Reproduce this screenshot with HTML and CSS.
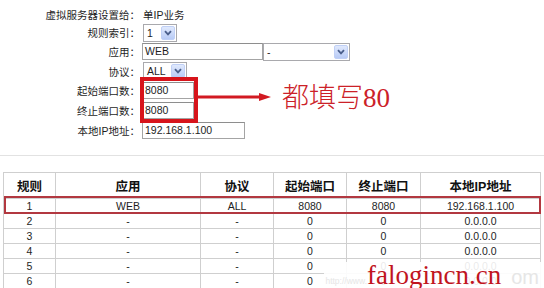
FILE: index.html
```html
<!DOCTYPE html>
<html lang="zh-CN">
<head>
<meta charset="utf-8">
<title>虚拟服务器</title>
<link rel="stylesheet" href="styles.css">
</head>
<body>
<div class="page">
  <div class="form">
    <div class="row h1"><span class="lbl">虚拟服务器设置给：</span><span class="val">单IP业务</span></div>
    <div class="row h2"><span class="lbl">规则索引：</span>
      <div class="sel s-idx"><span class="sv">1</span><span class="btn"><svg width="8" height="6" viewBox="0 0 8 6"><path d="M1 1.2 L4 4.4 L7 1.2" fill="none" stroke="#4a5f8c" stroke-width="1.8"/></svg></span></div>
    </div>
    <div class="row h3"><span class="lbl">应用：</span>
      <div class="inp i-app">WEB</div>
      <div class="sel s-app"><span class="sv">-</span><span class="btn"><svg width="8" height="6" viewBox="0 0 8 6"><path d="M1 1.2 L4 4.4 L7 1.2" fill="none" stroke="#4a5f8c" stroke-width="1.8"/></svg></span></div>
    </div>
    <div class="row h4"><span class="lbl">协议：</span>
      <div class="sel s-pro"><span class="sv">ALL</span><span class="btn"><svg width="8" height="6" viewBox="0 0 8 6"><path d="M1 1.2 L4 4.4 L7 1.2" fill="none" stroke="#4a5f8c" stroke-width="1.8"/></svg></span></div>
    </div>
    <div class="row h5"><span class="lbl">起始端口数：</span><div class="inp i-port">8080</div></div>
    <div class="row h6"><span class="lbl">终止端口数：</span><div class="inp i-port">8080</div></div>
    <div class="row h7"><span class="lbl">本地IP地址：</span><div class="inp i-ip">192.168.1.100</div></div>
  </div>

  <div class="redbox"></div>
  <svg class="arrow" width="76" height="12" viewBox="0 0 76 12"><line x1="0" y1="6" x2="64" y2="6" stroke="#d21a22" stroke-width="3"/><polygon points="62,2 74,6 62,10" fill="#d21a22"/></svg>
  <div class="note">都填写80</div>

  <div class="sep"></div>

  <div class="tablewrap">
    <table class="rules">
      <colgroup>
        <col class="c1"><col class="c2"><col class="c3"><col class="c4"><col class="c5"><col class="c6">
      </colgroup>
      <thead>
        <tr><th>规则</th><th>应用</th><th>协议</th><th>起始端口</th><th>终止端口</th><th>本地IP地址</th></tr>
      </thead>
      <tbody>
        <tr><td>1</td><td>WEB</td><td>ALL</td><td>8080</td><td>8080</td><td>192.168.1.100</td></tr>
        <tr><td>2</td><td>-</td><td>-</td><td>0</td><td>0</td><td>0.0.0.0</td></tr>
        <tr><td>3</td><td>-</td><td>-</td><td>0</td><td>0</td><td>0.0.0.0</td></tr>
        <tr><td>4</td><td>-</td><td>-</td><td>0</td><td>0</td><td>0.0.0.0</td></tr>
        <tr><td>5</td><td>-</td><td>-</td><td>0</td><td>0</td><td>0.0.0.0</td></tr>
        <tr><td>6</td><td>-</td><td>-</td><td>0</td><td>0</td><td>0.0.0.0</td></tr>
      </tbody>
    </table>
    <div class="hl"></div>
  </div>

  <div class="wm"><span class="wm-faint">http://www.</span><span class="wm-red">falogincn.cn</span><span class="wm-faint wm-om">om</span></div>
</div>
</body>
</html>
```

FILE: styles.css
```css
html, body {
  margin: 0;
  padding: 0;
  background: #fff;
}
.page {
  position: relative;
  width: 544px;
  height: 288px;
  overflow: hidden;
  font-family: "Liberation Sans", "Noto Sans CJK SC", sans-serif;
  font-size: 10.5px;
  color: #1e1e1e;
}
.form {
  padding-top: 5px;
}
.row {
  display: flex;
  align-items: center;
}
.h1 { height: 18px; }
.h2 { height: 19px; }
.h3 { height: 19px; }
.h4 { height: 20px; }
.h5 { height: 19px; }
.h6 { height: 20px; }
.h7 { height: 21px; }
.lbl {
  flex: none;
  width: 140px;
  text-align: right;
  white-space: nowrap;
}
.val {
  margin-left: 3px;
}
.inp {
  margin-left: 2px;
  box-sizing: border-box;
  height: 17px;
  border: 1px solid #a4a4a4;
  border-top-color: #8e8e8e;
  padding-left: 2px;
  line-height: 15px;
  background: #fff;
  white-space: nowrap;
}
.i-app { width: 121px; }
.i-port { width: 52px; }
.i-ip { width: 103px; }
.sel {
  margin-left: 3px;
  box-sizing: border-box;
  height: 18px;
  border: 1px solid #a9a9ad;
  display: flex;
  align-items: center;
  justify-content: space-between;
  padding: 0 1px 0 3px;
  background: #fff;
}
.i-app + .sel { margin-left: 0; }
.s-idx { width: 34px; }
.s-app { width: 87px; }
.s-pro { width: 44px; }
.sv { line-height: 16px; }
.btn {
  box-sizing: border-box;
  width: 14px;
  height: 14px;
  border: 1px solid #c0d0f6;
  border-radius: 2px;
  background: linear-gradient(#e0e9fd, #b8cbf6);
  display: flex;
  align-items: center;
  justify-content: center;
}
.redbox {
  position: absolute;
  left: 140px;
  top: 77px;
  width: 58px;
  height: 46px;
  box-sizing: border-box;
  border: 4px solid #d7141b;
}
.arrow {
  position: absolute;
  left: 197px;
  top: 91px;
}
.note {
  position: absolute;
  left: 282px;
  top: 83px;
  font-family: "Liberation Serif", "Noto Sans CJK SC", serif;
  font-size: 27px;
  font-weight: 300;
  line-height: 30px;
  color: #cc2128;
  white-space: nowrap;
}
.sep {
  margin-top: 14px;
  height: 0;
  border-top: 1px solid #e2e2e2;
}
.tablewrap {
  position: relative;
  margin-top: 16px;
}
.rules {
  margin-left: 3px;
  border-collapse: collapse;
  table-layout: fixed;
  width: 537px;
}
.c1 { width: 52px; }
.c2 { width: 145px; }
.c3 { width: 73px; }
.c4 { width: 73px; }
.c5 { width: 74px; }
.c6 { width: 120px; }
.rules th, .rules td {
  border: 1px solid #cfcfcf;
  text-align: center;
  padding: 0;
  white-space: nowrap;
}
.rules th {
  height: 25px;
  font-size: 12.5px;
  font-weight: bold;
  color: #111;
}
.rules td {
  height: 14px;
  line-height: 13px;
  font-size: 10.5px;
}
.hl {
  position: absolute;
  left: 4px;
  top: 24px;
  width: 537px;
  height: 18px;
  box-sizing: border-box;
  border: 2px solid #b23840;
}
.wm {
  position: absolute;
  left: 324px;
  top: 262px;
  width: 220px;
  height: 26px;
  background: rgba(255, 255, 255, 0.9);
  display: flex;
  align-items: baseline;
  line-height: 26px;
}
.wm-faint {
  font-family: "Liberation Sans", sans-serif;
  font-size: 8.5px;
  color: #e6e6e6;
  width: 43px;
  text-align: right;
  white-space: nowrap;
}
.wm-red {
  font-family: "Liberation Serif", serif;
  font-size: 27px;
  color: #c1151e;
  white-space: nowrap;
}
.wm-om {
  font-size: 20px;
  width: auto;
  margin-left: 10px;
}
```
